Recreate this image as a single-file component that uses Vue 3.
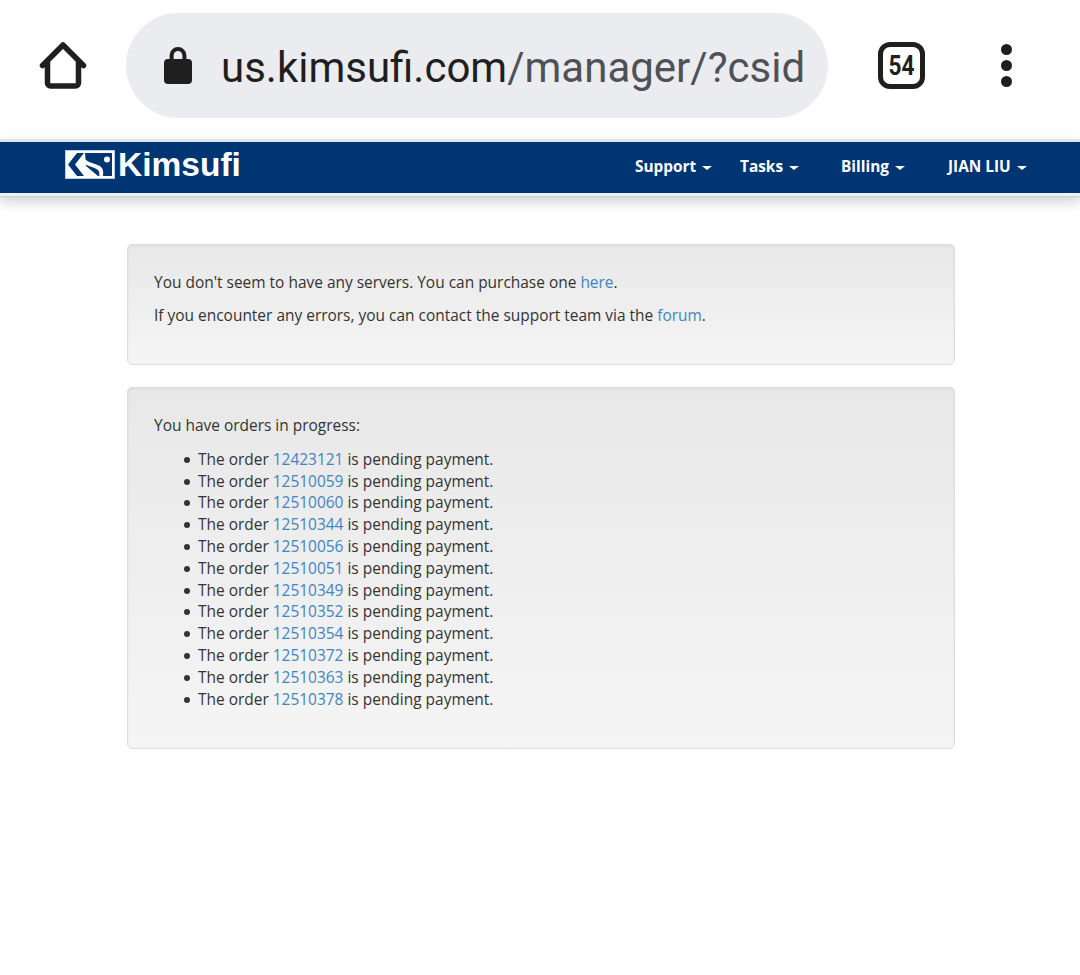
<template>
  <div class="page">
    <header class="chrome">
      <svg class="home" width="48" height="50" viewBox="0 0 48 50" fill="none">
        <path d="M3.500 24.500 24 4l20.500 20.500M8.500 19.500V42a3 3 0 0 0 3 3h25a3 3 0 0 0 3-3V19.500" stroke="#1f1f1f" stroke-width="5.500" stroke-linecap="round" stroke-linejoin="round" />
      </svg>
      <div class="omnibox">
        <svg class="lock" width="28" height="38" viewBox="0 0 28 38">
          <path d="M7.600 15V8.400a6.400 6.400 0 0 1 12.800 0V15" fill="none" stroke="#1f1f1f" stroke-width="4" />
          <rect x="0" y="12" width="28" height="25" rx="4" fill="#1f1f1f" />
        </svg>
        <div class="url"><span class="host">us.kimsufi.com</span><span class="path">/manager/?csid</span></div>
      </div>
      <div class="tabs"><span>54</span></div>
      <div class="kebab"><i></i><i></i><i></i></div>
    </header>
    <nav class="nav">
      <div class="brand">
        <svg width="50" height="29" viewBox="0 0 50 29">
          <rect x="0.500" y="0.500" width="49" height="28" fill="#fff" stroke="#b9cfe6" />
          <path d="M12 3h7L10 14.500 19 26h-7L3 14.500z" fill="#003574" />
          <path d="M20 3h27v23H33L21 16z" fill="#003574" />
          <path d="M17 8c3 7 10 6 15 9 3 1 5 4 4 9" fill="none" stroke="#fff" stroke-width="4" />
          <circle cx="42" cy="9.500" r="3" fill="#fff" />
        </svg>
        <span>Kimsufi</span>
      </div>
      <ul class="menu">
        <li v-for="item in menu" :key="item.label" :style="{ width: item.width + 'px' }">
          {{ item.label }}<b class="caret"></b>
        </li>
      </ul>
    </nav>
    <main class="content">
      <section class="well first">
        <p>You don't seem to have any servers. You can purchase one <a>here</a>.</p>
        <p>If you encounter any errors, you can contact the support team via the <a>forum</a>.</p>
      </section>
      <section class="well second">
        <p>You have orders in progress:</p>
        <ul class="orders">
          <li v-for="order in orders" :key="order">The order <a>{{ order }}</a> is pending payment.</li>
        </ul>
      </section>
    </main>
  </div>
</template>

<script setup>
const menu = [
  { label: 'Support', width: 105 },
  { label: 'Tasks', width: 101 },
  { label: 'Billing', width: 107 },
  { label: 'JIAN LIU', width: 92 }
]
const orders = [
  '12423121', '12510059', '12510060', '12510344', '12510056', '12510051',
  '12510349', '12510352', '12510354', '12510372', '12510363', '12510378'
]
</script>

<style>
html, body { margin: 0; background: #fff; }
</style>

<style scoped>
.page {
  width: 1080px;
  height: 975px;
  overflow: hidden;
  background: #fff;
  font-family: "Open Sans", sans-serif;
  color: #333;
}
.chrome {
  height: 139px;
  box-sizing: border-box;
  padding: 13px 0 21px 39px;
  display: flex;
  align-items: center;
}
.home { flex: none; }
.omnibox {
  margin-left: 39px;
  width: 702px;
  height: 105px;
  flex: none;
  box-sizing: border-box;
  padding-left: 38px;
  border-radius: 52.500px;
  background: #ebecf0;
  display: flex;
  align-items: center;
}
.lock { flex: none; }
.url {
  margin-left: 29px;
  font-family: Roboto, sans-serif;
  font-size: 42px;
  white-space: nowrap;
  margin-top: 4px;
}
.host { color: #1f1f1f; }
.path { color: #4f5156; }
.tabs {
  margin-left: 50px;
  width: 47px;
  height: 47px;
  flex: none;
  box-sizing: border-box;
  border: 5.500px solid #1f1f1f;
  border-radius: 12px;
  display: flex;
  align-items: center;
  justify-content: center;
  font-family: Roboto, sans-serif;
  font-weight: 700;
  font-size: 27px;
  color: #1f1f1f;
  background: #fff;
}
.tabs span {
  display: block;
  transform: scaleX(0.84);
}
.kebab {
  margin-left: 76px;
  display: flex;
  flex-direction: column;
  gap: 4.700px;
}
.kebab i {
  display: block;
  width: 11px;
  height: 11px;
  border-radius: 50%;
  background: #1f1f1f;
}
.nav {
  height: 57px;
  box-sizing: border-box;
  background: #003574;
  border-top: 3px solid #dde4ea;
  border-bottom: 3px solid #eef2f5;
  box-shadow: 0 1px 1px #c5d0d3, 0 6px 12px rgba(120, 130, 135, 0.35);
  display: flex;
  justify-content: space-between;
  position: relative;
  padding: 0 40px 0 65px;
}
.brand {
  display: flex;
  align-items: center;
  height: 45px;
  color: #fff;
  font-family: "Liberation Sans", sans-serif;
  font-weight: 700;
  font-size: 33.500px;
}
.brand svg { margin-right: 3px; }
.menu {
  list-style: none;
  margin: 0;
  padding: 0;
  display: flex;
}
.menu li {
  box-sizing: border-box;
  white-space: nowrap;
  color: #fff;
  font-weight: 700;
  font-size: 15.400px;
  line-height: 50px;
}
.caret {
  display: inline-block;
  margin-left: 6px;
  vertical-align: middle;
  width: 0;
  height: 0;
  border-top: 4px solid #fff;
  border-left: 5px solid transparent;
  border-right: 5px solid transparent;
}
.content {
  margin-top: 48px;
  padding: 0 125px 0 127px;
  display: flex;
  flex-direction: column;
  gap: 22px;
}
.well {
  box-sizing: border-box;
  padding: 26px 26px 0;
  border: 1px solid #dcdcdc;
  border-radius: 5px;
  background: linear-gradient(#e8e8e8, #f5f5f5);
  box-shadow: inset 0 1px 3px rgba(0, 0, 0, 0.06);
  font-size: 15.460px;
  line-height: 22px;
}
.first { height: 121px; }
.second { height: 362px; }
.well p { margin: 0 0 11px; }
.well a { color: #4285bf; }
.orders {
  list-style: none;
  margin: 12.850px 0 0;
  padding: 0 0 0 44px;
  line-height: 21.800px;
}
.orders li { position: relative; }
.orders li::before {
  content: "";
  position: absolute;
  left: -14px;
  top: 8px;
  width: 6px;
  height: 6px;
  border-radius: 50%;
  background: #333;
}
</style>
